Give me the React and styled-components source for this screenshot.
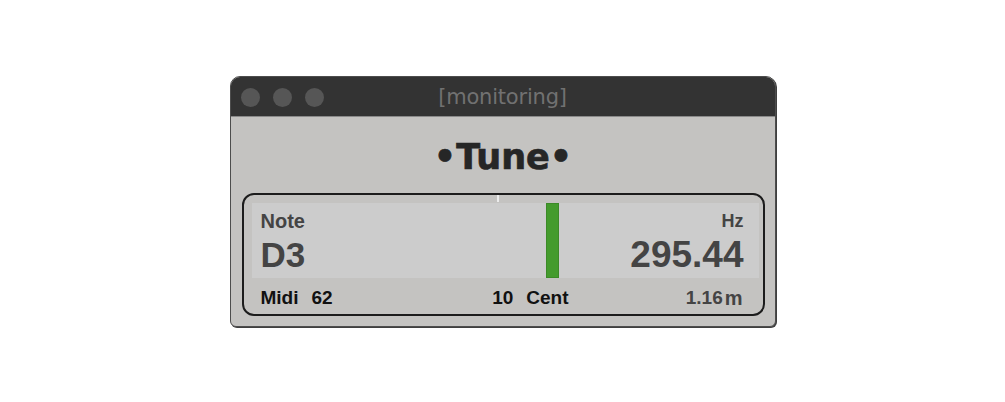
import styled, { createGlobalStyle } from "styled-components";

const GlobalStyle = createGlobalStyle`
  html, body {
    margin: 0;
    padding: 0;
    background: #ffffff;
  }
  body {
    font-family: "Liberation Sans", Arial, sans-serif;
  }
`;

const Page = styled.div`
  width: 1005px;
  height: 402px;
  display: flex;
  align-items: center;
  justify-content: center;
`;

const Window = styled.div`
  width: 544px;
  height: 249px;
  border: 1px solid #4d4d4d;
  border-radius: 10px 10px 6px 6px;
  box-shadow: 1px 1px 0 #3f3f3f;
  background: #c4c3c1;
  overflow: hidden;
  display: flex;
  flex-direction: column;
`;

const TitleBar = styled.div`
  position: relative;
  height: 40px;
  flex: none;
  background: #333333;
  border-bottom: 1px solid #8a8a8a;
  box-sizing: border-box;
  display: flex;
  align-items: center;
  justify-content: center;
`;

const Lights = styled.div`
  position: absolute;
  left: 10px;
  top: 11px;
  display: flex;
  gap: 13px;
`;

const Light = styled.span`
  width: 19px;
  height: 19px;
  border-radius: 50%;
  background: #565656;
`;

const WindowTitle = styled.div`
  font-family: "DejaVu Sans", sans-serif;
  font-size: 21px;
  color: #717171;
  letter-spacing: -0.2px;
  margin-top: 1px;
`;

const Content = styled.div`
  flex: 1;
  padding: 20px 10px 10px 11px;
  display: flex;
  flex-direction: column;
  align-items: stretch;
`;

const Heading = styled.h1`
  margin: 0;
  height: 40px;
  line-height: 40px;
  text-align: center;
  font-family: "DejaVu Sans", sans-serif;
  font-weight: bold;
  font-size: 35px;
  color: #262626;
  -webkit-text-stroke: 0.7px #262626;
`;

const Panel = styled.div`
  position: relative;
  margin-top: 16px;
  height: 123px;
  box-sizing: border-box;
  border: 2px solid #1c1c1c;
  border-radius: 12px;
  padding: 8px 4px 0 8px;
  display: flex;
  flex-direction: column;
`;

const Tick = styled.span`
  position: absolute;
  left: 253px;
  top: 0;
  width: 2px;
  height: 7px;
  background: #ececec;
`;

const Display = styled.div`
  position: relative;
  height: 75px;
  flex: none;
  background: #cccccc;
  padding: 7px 15px 0 9px;
  box-sizing: border-box;
  display: flex;
  justify-content: space-between;
`;

const Column = styled.div`
  display: flex;
  flex-direction: column;
  align-items: ${(p) => (p.$right ? "flex-end" : "flex-start")};
  color: #444444;
  font-weight: bold;
`;

const Label = styled.div`
  font-size: ${(p) => p.$size}px;
  line-height: 22px;
`;

const Value = styled.div`
  font-size: ${(p) => p.$size}px;
  line-height: 36px;
  margin-top: 5px;
`;

const Needle = styled.span`
  position: absolute;
  top: 0;
  bottom: 0;
  width: 13px;
  background: #449b2d;
  box-shadow: inset 0 0 0 1px #3b8a27;
`;

const BottomRow = styled.div`
  margin-top: 10px;
  display: grid;
  grid-template-columns: 1fr auto 190px;
  font-size: 19px;
  line-height: 20px;
  font-weight: bold;
  padding-left: 9px;
`;

const Pair = styled.div`
  display: flex;
  gap: ${(p) => p.$gap}px;
  color: ${(p) => p.$color || "#111111"};
  justify-content: ${(p) => (p.$right ? "flex-end" : "flex-start")};
  padding-right: ${(p) => (p.$right ? 16 : 0)}px;
`;

const Unit = styled.span`
  font-size: 20px;
`;

export default function App() {
  const cents = 10;
  return (
    <Page>
      <GlobalStyle />
      <Window>
        <TitleBar>
          <Lights>
            <Light />
            <Light />
            <Light />
          </Lights>
          <WindowTitle>[monitoring]</WindowTitle>
        </TitleBar>
        <Content>
          <Heading>•Tune•</Heading>
          <Panel>
            <Tick />
            <Display>
              <Column>
                <Label $size={20}>Note</Label>
                <Value $size={35}>D3</Value>
              </Column>
              <Needle style={{ left: 254 + cents * 4 }} />
              <Column $right>
                <Label $size={18}>Hz</Label>
                <Value $size={37}>295.44</Value>
              </Column>
            </Display>
            <BottomRow>
              <Pair $gap={13}>
                <span>Midi</span>
                <span>62</span>
              </Pair>
              <Pair $gap={13}>
                <span>10</span>
                <span>Cent</span>
              </Pair>
              <Pair $gap={2} $right $color="#444444">
                <span>1.16</span>
                <Unit>m</Unit>
              </Pair>
            </BottomRow>
          </Panel>
        </Content>
      </Window>
    </Page>
  );
}
